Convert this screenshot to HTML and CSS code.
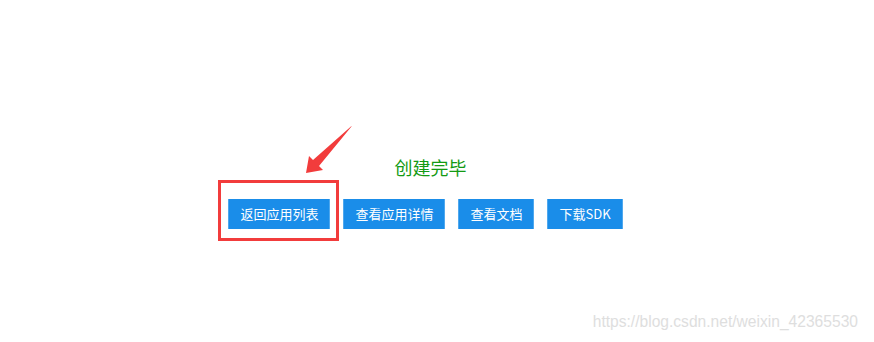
FILE: index.html
```html
<!DOCTYPE html>
<html lang="zh-CN">
<head>
<meta charset="utf-8">
<title>创建完毕</title>
<link rel="stylesheet" href="styles.css">
</head>
<body>
<main class="page">
  <section class="result">
    <h2 class="result-title">创建完毕</h2>
    <div class="actions">
      <button class="btn" type="button">返回应用列表</button>
      <button class="btn" type="button">查看应用详情</button>
      <button class="btn" type="button">查看文档</button>
      <button class="btn" type="button">下载SDK</button>
    </div>
  </section>

  <div class="mark-box" aria-hidden="true"></div>
  <svg class="mark-arrow" width="60" height="60" viewBox="300 120 60 60" aria-hidden="true">
    <polygon points="351.5,126 313,160 309,156 306,173 323,170 319,166 351.5,126.6" fill="#f23c3c"/>
  </svg>

  <div class="watermark">https://blog.csdn.net/weixin_42365530</div>
</main>
</body>
</html>
```

FILE: styles.css
```css
html, body {
  margin: 0;
  padding: 0;
  background: #ffffff;
}

body {
  font-family: "Microsoft YaHei", "Noto Sans CJK SC", "Noto Sans", sans-serif;
}

.page {
  position: relative;
  width: 874px;
  height: 342px;
  overflow: hidden;
}

.result {
  width: 861px;
  padding-top: 155px;
}

.result-title {
  margin: 0;
  font-size: 18px;
  line-height: 24px;
  font-weight: normal;
  color: #139a13;
  text-align: center;
}

.actions {
  display: flex;
  justify-content: center;
  gap: 13px;
  margin-top: 20px;
  padding-right: 10px;
}

.btn {
  height: 30px;
  padding: 0 11px;
  border: 0;
  border-left: 1px solid #4fa8ee;
  border-right: 1px solid #4fa8ee;
  background: #1a8de9;
  color: #ffffff;
  font-family: inherit;
  font-size: 13px;
  line-height: 30px;
  cursor: pointer;
}

.mark-box {
  position: absolute;
  left: 218px;
  top: 180px;
  width: 115px;
  height: 55px;
  border: 3px solid #f23c3c;
}

.mark-arrow {
  position: absolute;
  left: 300px;
  top: 120px;
}

.watermark {
  position: absolute;
  right: 16px;
  top: 312px;
  font-family: "Liberation Sans", Arial, sans-serif;
  font-size: 15.6px;
  line-height: 20px;
  color: #dedede;
  white-space: nowrap;
}
```
